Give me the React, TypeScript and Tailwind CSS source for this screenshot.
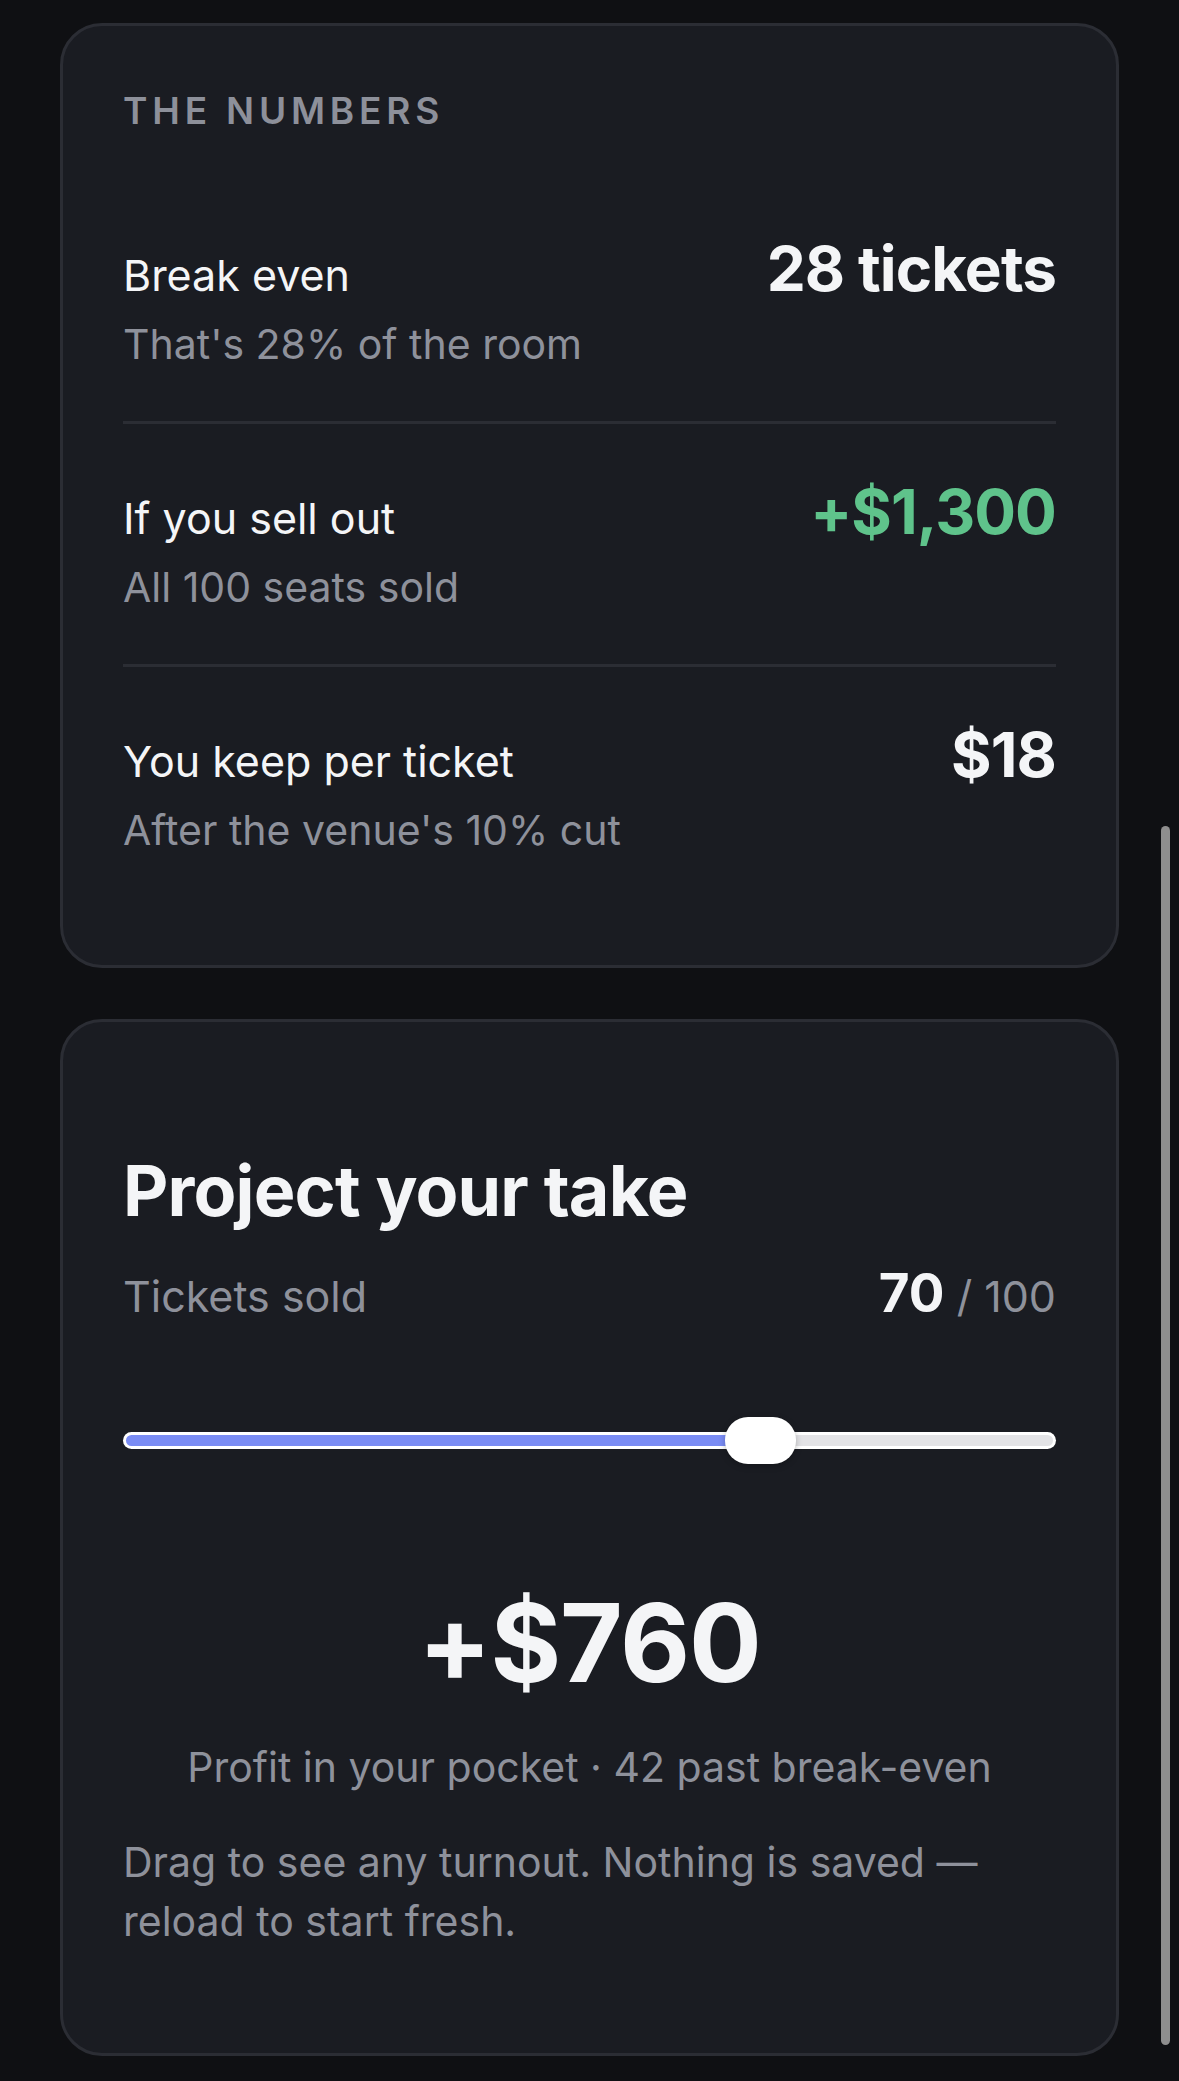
import React, { useState } from "react";

const COST = 500;
const NET = 18;
const CAP = 100;

function Row({
  label,
  sub,
  value,
  valueClass,
  last,
}: {
  label: string;
  sub: string;
  value: string;
  valueClass: string;
  last?: boolean;
}) {
  return (
    <div
      className={
        "flex items-baseline justify-between pt-[60px] " +
        (last ? "pb-0" : "pb-[42px] border-b-[3px] border-[#2b2d34]")
      }
    >
      <div className="flex flex-col">
        <div className="text-[43px] leading-[69px] text-[#f4f5f7]">{label}</div>
        <div className="text-[41px] leading-[69px] text-[#8e919b]">{sub}</div>
      </div>
      <div className={"text-[62px] leading-[56px] font-bold tracking-[-0.015em] " + valueClass}>
        {value}
      </div>
    </div>
  );
}

export default function App() {
  const [sold, setSold] = useState(70);
  const breakEven = Math.ceil(COST / NET);
  const profit = sold * NET - COST;
  const sellOut = CAP * NET - COST;
  const pct = sold / CAP;
  const thumbW = 71;
  const trackW = 931;
  const thumbLeft = (trackW - thumbW) * pct;
  const fillW = thumbLeft + thumbW / 2;

  return (
    <div
      className="min-h-[2081px] bg-[#0f1013] px-[60px] pt-[23px] pb-[25px]"
      style={{ fontFamily: "Inter, 'Noto Sans', sans-serif" }}
    >
      <div className="flex flex-col gap-[51px]">
        {/* The numbers card */}
        <div className="rounded-[42px] border-[3px] border-[#2b2d34] bg-[#1a1c22] px-[60px] pt-[66px] pb-[100px]">
          <div className="text-[37px] leading-[37px] font-semibold tracking-[0.13em] text-[#8d909a] mb-[52px]">
            THE NUMBERS
          </div>
          <Row
            label="Break even"
            sub={`That's ${breakEven}% of the room`}
            value={`${breakEven} tickets`}
            valueClass="text-[#f4f5f7]"
          />
          <Row
            label="If you sell out"
            sub={`All ${CAP} seats sold`}
            value={`+$${sellOut.toLocaleString("en-US")}`}
            valueClass="text-[#5fc38b]"
          />
          <Row
            label="You keep per ticket"
            sub="After the venue's 10% cut"
            value={`$${NET}`}
            valueClass="text-[#f4f5f7]"
            last
          />
        </div>

        {/* Project card */}
        <div className="rounded-[42px] border-[3px] border-[#2b2d34] bg-[#1a1c22] px-[60px] pt-[135px] pb-[102px]">
          <div className="text-[70px] leading-[68px] font-bold tracking-[-0.012em] text-[#f4f5f7]">
            Project your take
          </div>
          <div className="mt-[41px] flex items-baseline justify-between">
            <div className="text-[43px] leading-[60px] text-[#8e919b]">Tickets sold</div>
            <div className="text-[43px] leading-[60px] text-[#8e919b]">
              <span className="text-[53px] leading-[52px] font-bold text-[#f4f5f7]">{sold}</span> / {CAP}
            </div>
          </div>

          <div className="relative mt-[91px] h-[47px] flex items-center">
            <div className="w-full h-[17px] rounded-full bg-white p-[3px] flex overflow-hidden">
              <div className="h-full rounded-l-full bg-[#7a8cf4]" style={{ width: fillW }} />
              <div className="h-full flex-1 rounded-r-full bg-[#e3e3e6]" />
            </div>
            <div
              className="absolute top-0 h-[47px] w-[71px] rounded-[23px] bg-white shadow-[0_2px_6px_rgba(0,0,0,0.25)]"
              style={{ left: thumbLeft }}
            />
            <input
              type="range"
              min={0}
              max={CAP}
              value={sold}
              onChange={(e) => setSold(Number(e.target.value))}
              className="absolute inset-0 w-full h-full opacity-0 cursor-pointer"
            />
          </div>

          <div className="mt-[125px] text-center text-[108px] leading-[108px] font-bold tracking-[-0.01em] text-[#f4f5f7]">
            {profit >= 0 ? "+" : "−"}${Math.abs(profit).toLocaleString("en-US")}
          </div>
          <div className="mt-[41px] text-center text-[41px] leading-[59px] text-[#8e919b]">
            {profit >= 0 ? "Profit in your pocket" : "Loss"} · {Math.abs(sold - breakEven)}{" "}
            {sold >= breakEven ? "past" : "short of"} break-even
          </div>
          <div className="mt-[36px] text-[41px] leading-[59px] text-[#8e919b]">
            Drag to see any turnout. Nothing is saved — reload to start fresh.
          </div>
        </div>
      </div>

      {/* iOS scroll indicator overlay */}
      <div className="fixed left-[1161px] top-[826px] h-[1219px] w-[9px] rounded-full bg-[#8e8e8e]" />
    </div>
  );
}
